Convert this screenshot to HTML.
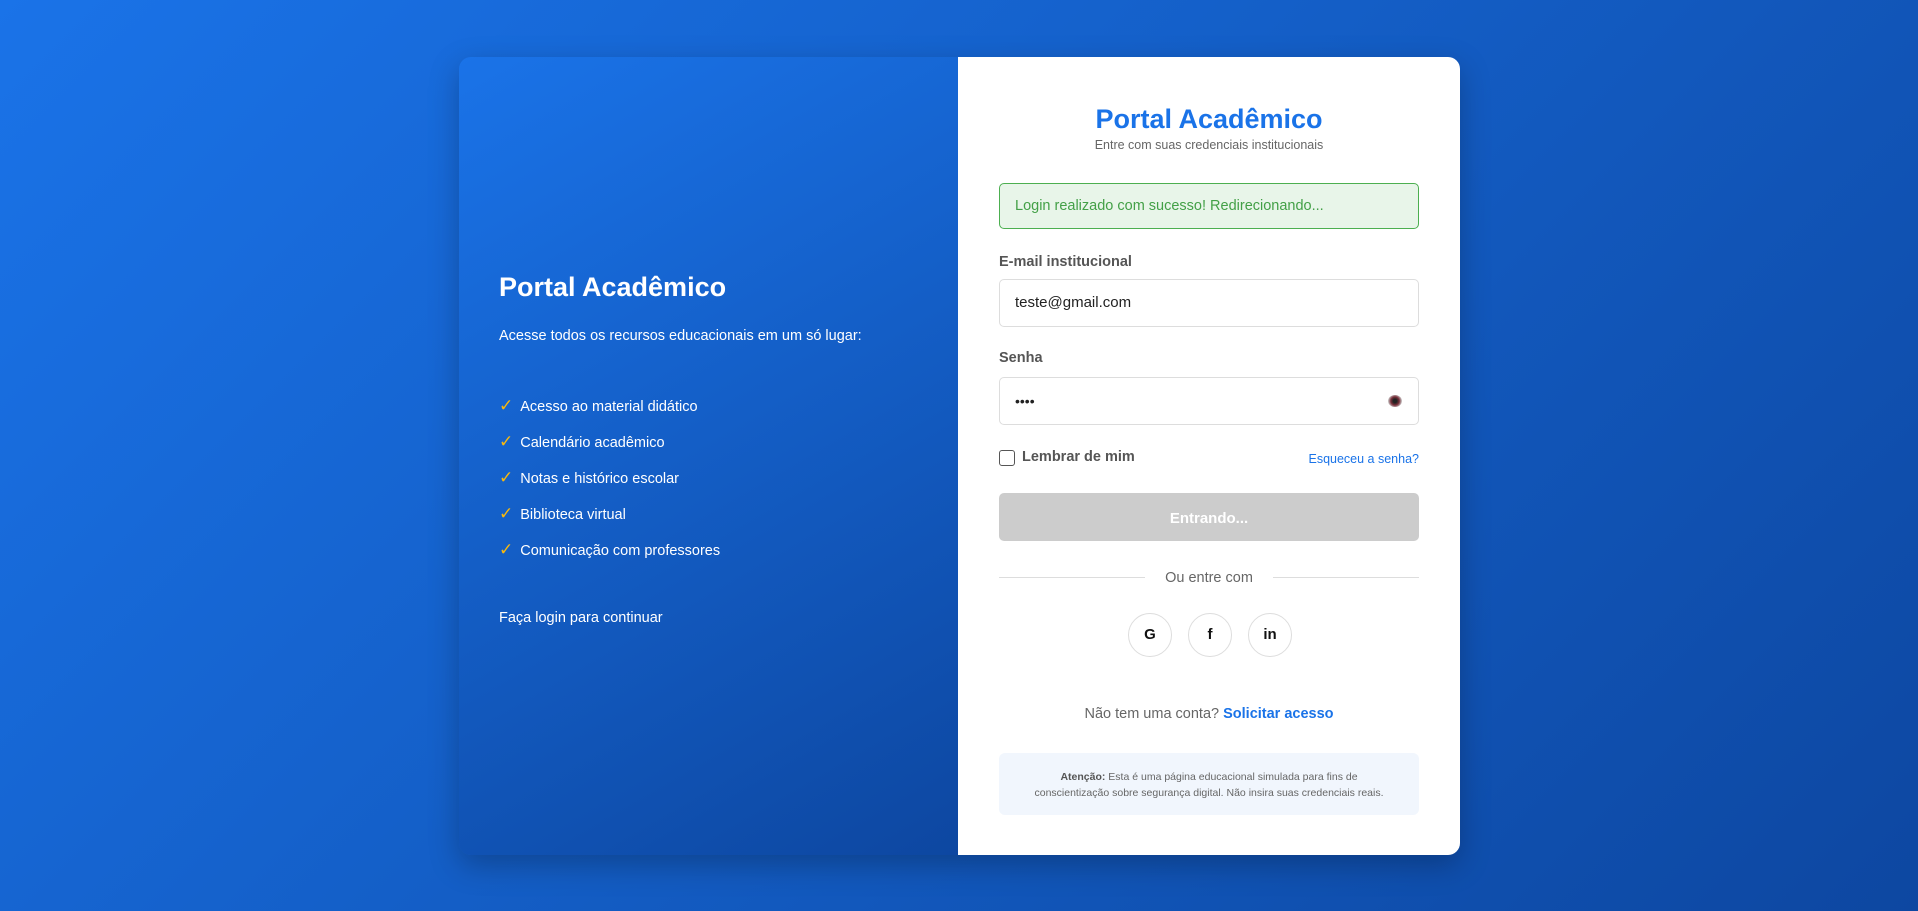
<!DOCTYPE html>
<html><head><meta charset="utf-8"><style>
*{box-sizing:border-box;margin:0;padding:0}
body{width:1918px;height:911px;overflow:hidden;background:linear-gradient(135deg,#1a73e8,#0d47a1);font-family:"Liberation Sans",sans-serif;position:relative}
.card{position:absolute;left:459px;top:57px;width:1001px;height:798px;border-radius:12px;overflow:hidden;box-shadow:0 10px 30px rgba(0,0,0,.25);display:flex}
.left{width:499px;background:linear-gradient(150deg,#1a73e8,#0d47a1);color:#fff;position:relative}
.right{width:502px;background:#fff;position:relative}
.a{position:absolute;white-space:nowrap}
.lt{left:40px;font-size:27px;font-weight:bold;top:215px}
.ls{left:40px;font-size:14.5px;top:271px}
.li{left:40px;font-size:14.5px}
.li b{color:#f9b90d;font-weight:normal;margin-right:7px;font-size:17px}
.in{left:41px;width:420px;border:1px solid #ddd;border-radius:5px;height:48px;font-size:15px;padding:0 15px;line-height:46px;color:#222}
.lab{left:41px;font-size:14.5px;font-weight:bold;color:#555}
.soc{width:44px;height:44px;border:1px solid #ddd;border-radius:50%;top:556px;text-align:center;line-height:42px;font-weight:bold;font-size:15px;color:#111}
</style></head><body>
<div class="card">
<div class="left">
<div class="a lt">Portal Acadêmico</div>
<div class="a ls">Acesse todos os recursos educacionais em um só lugar:</div>
<div class="a li" style="top:339px"><b>✓</b>Acesso ao material didático</div>
<div class="a li" style="top:375px"><b>✓</b>Calendário acadêmico</div>
<div class="a li" style="top:411px"><b>✓</b>Notas e histórico escolar</div>
<div class="a li" style="top:447px"><b>✓</b>Biblioteca virtual</div>
<div class="a li" style="top:483px"><b>✓</b>Comunicação com professores</div>
<div class="a li" style="top:553px">Faça login para continuar</div>
</div>
<div class="right">
<div class="a" style="left:0;width:502px;text-align:center;top:47px;font-size:27px;font-weight:bold;color:#1a73e8">Portal Acadêmico</div>
<div class="a" style="left:0;width:502px;text-align:center;top:81px;font-size:12.5px;color:#666">Entre com suas credenciais institucionais</div>
<div class="a" style="left:41px;top:126px;width:420px;height:46px;border:1px solid #4caf50;border-radius:5px;background:#e8f5e9;color:#43a047;font-size:14.5px;line-height:44px;padding-left:15px">Login realizado com sucesso! Redirecionando...</div>
<div class="a lab" style="top:197px">E-mail institucional</div>
<div class="a in" style="top:222px">teste@gmail.com</div>
<div class="a lab" style="top:293px">Senha</div>
<div class="a in" style="top:320px;font-size:14px;letter-spacing:0">••••<span style="position:absolute;right:16px;top:17px;width:14px;height:12px;border-radius:50%;background:radial-gradient(circle at 50% 50%,#222 20%,#7a2f3a 45%,#ccc 75%)"></span></div>
<div class="a" style="left:41px;top:393px;width:16px;height:16px;border:1.5px solid #555;border-radius:3px"></div>
<div class="a lab" style="left:64px;top:392px">Lembrar de mim</div>
<div class="a" style="right:41px;top:395px;font-size:12.5px;color:#1a73e8">Esqueceu a senha?</div>
<div class="a" style="left:41px;top:436px;width:420px;height:48px;background:#ccc;border-radius:5px;color:#fff;font-weight:bold;font-size:15px;text-align:center;line-height:52px">Entrando...</div>
<div class="a" style="left:41px;top:520px;width:146px;border-top:1px solid #ddd"></div>
<div class="a" style="left:315px;top:520px;width:146px;border-top:1px solid #ddd"></div>
<div class="a" style="left:0;width:502px;text-align:center;top:513px;font-size:14.5px;color:#666">Ou entre com</div>
<div class="a soc" style="left:170px">G</div>
<div class="a soc" style="left:230px">f</div>
<div class="a soc" style="left:290px">in</div>
<div class="a" style="left:0;width:502px;text-align:center;top:649px;font-size:14.5px;color:#666">Não tem uma conta? <span style="color:#1a73e8;font-weight:bold">Solicitar acesso</span></div>
<div class="a" style="left:41px;top:696px;width:420px;height:62px;background:#f1f6fd;border-radius:6px;font-size:10.5px;color:#666;text-align:center;padding-top:16px;line-height:16px;white-space:normal"><b style="color:#555">Atenção:</b> Esta é uma página educacional simulada para fins de<br>conscientização sobre segurança digital. Não insira suas credenciais reais.</div>
</div>
</div>
</body></html>
